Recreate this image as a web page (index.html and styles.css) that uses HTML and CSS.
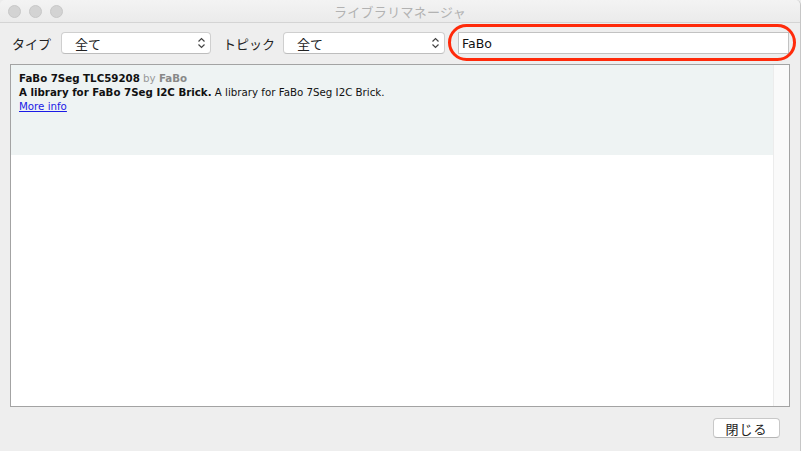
FILE: index.html
```html
<!DOCTYPE html>
<html>
<head>
<meta charset="utf-8">
<link rel="stylesheet" href="styles.css">
</head>
<body>
<div class="window">
  <div class="titlebar">
    <div class="lights">
      <span class="light"></span><span class="light"></span><span class="light"></span>
    </div>
    <div class="title">ライブラリマネージャ</div>
  </div>
  <div class="toolbar">
    <span class="label">タイプ</span>
    <div class="select sel-type">
      <span>全て</span>
      <svg class="arrows" width="9" height="12" viewBox="0 0 9 12"><path d="M1.5 4.5 L4.5 1.5 L7.5 4.5 M1.5 7.5 L4.5 10.5 L7.5 7.5" fill="none" stroke="#444" stroke-width="1.2"/></svg>
    </div>
    <span class="label label-topic">トピック</span>
    <div class="select sel-topic">
      <span>全て</span>
      <svg class="arrows" width="9" height="12" viewBox="0 0 9 12"><path d="M1.5 4.5 L4.5 1.5 L7.5 4.5 M1.5 7.5 L4.5 10.5 L7.5 7.5" fill="none" stroke="#444" stroke-width="1.2"/></svg>
    </div>
    <div class="search-wrap">
      <div class="search">FaBo</div>
      <div class="ring"></div>
    </div>
  </div>
  <div class="list">
    <div class="items">
      <div class="item">
        <div class="line"><b>FaBo 7Seg TLC59208</b> <span class="by">by <b>FaBo</b></span></div>
        <div class="line"><b>A library for FaBo 7Seg I2C Brick.</b> A library for FaBo 7Seg I2C Brick.</div>
        <div class="line"><a href="#">More info</a></div>
      </div>
    </div>
    <div class="scrollbar"></div>
  </div>
  <div class="footer">
    <div class="button">閉じる</div>
  </div>
</div>
</body>
</html>
```

FILE: styles.css
```css
html, body {
  margin: 0;
  padding: 0;
}
body {
  width: 801px;
  height: 451px;
  overflow: hidden;
  background: #ececec;
  font-family: "Noto Sans CJK JP", "DejaVu Sans", sans-serif;
}
.window {
  width: 800px;
  height: 451px;
  background: #eeeeee;
  border-right: 1px solid #c6c6c6;
  border-radius: 5px 5px 0 0;
  display: flex;
  flex-direction: column;
}
.titlebar {
  height: 22px;
  background: linear-gradient(#f3f3f3, #ebebeb);
  border-bottom: 1px solid #d4d4d4;
  border-radius: 5px 5px 0 0;
  display: flex;
  align-items: center;
  position: relative;
}
.lights {
  display: flex;
  gap: 8px;
  padding-left: 8px;
}
.light {
  width: 11px;
  height: 11px;
  border-radius: 50%;
  background: #d3d3d3;
  border: 0.5px solid #c8c8c8;
}
.title {
  position: absolute;
  left: 0;
  right: 0;
  text-align: center;
  font-size: 13px;
  color: #b2b2b2;
  letter-spacing: 0.3px;
}
.toolbar {
  display: flex;
  align-items: center;
  padding: 9px 0 0 12px;
  height: 22px;
}
.label {
  font-size: 13px;
  color: #222;
}
.select {
  background: #fff;
  border: 1px solid #cfcfcf;
  border-bottom-color: #bdbdbd;
  border-radius: 4px;
  display: flex;
  align-items: center;
  justify-content: space-between;
  padding: 0 4px 0 13px;
  font-size: 13px;
  color: #222;
  box-sizing: border-box;
  height: 22px;
}
.sel-type {
  margin-left: 10px;
  width: 150px;
}
.label-topic {
  margin-left: 12px;
}
.sel-topic {
  margin-left: 8px;
  width: 162px;
}
.search-wrap {
  margin-left: 13px;
  position: relative;
}
.search {
  width: 331px;
  height: 22px;
  box-sizing: border-box;
  background: #fff;
  border: 1px solid #c2c2c2;
  font-family: "DejaVu Sans", sans-serif;
  font-size: 12.5px;
  color: #111;
  padding: 3px 0 0 3px;
}
.ring {
  position: absolute;
  left: -10px;
  top: -8px;
  width: 348px;
  height: 37px;
  box-sizing: border-box;
  border: 3px solid #ff2a0a;
  border-radius: 19px;
}
.list {
  margin: 10px 0 0 10px;
  width: 780px;
  height: 343px;
  box-sizing: border-box;
  border: 1px solid #a3a3a3;
  background: #fff;
  display: flex;
}
.items {
  flex: 1;
}
.item {
  height: 90px;
  background: #eef3f3;
  padding: 6px 8px;
  box-sizing: border-box;
  font-family: "DejaVu Sans", sans-serif;
  font-size: 10.25px;
  color: #111;
}
.line {
  height: 14px;
  line-height: 14px;
  white-space: nowrap;
}
.by {
  color: #999;
}
.by b {
  color: #888;
}
.line a {
  color: #1a1ae6;
  text-decoration: underline;
}
.scrollbar {
  width: 15px;
  background: #fafafa;
  border-left: 1px solid #ececec;
}
.footer {
  display: flex;
  justify-content: flex-end;
  padding: 11px 20px 0 0;
}
.button {
  width: 67px;
  height: 20px;
  box-sizing: border-box;
  background: #fff;
  border: 1px solid #c8c8c8;
  border-bottom-color: #b5b5b5;
  border-radius: 4px;
  font-size: 13px;
  color: #222;
  display: flex;
  align-items: center;
  justify-content: center;
  letter-spacing: 1px;
}
```
